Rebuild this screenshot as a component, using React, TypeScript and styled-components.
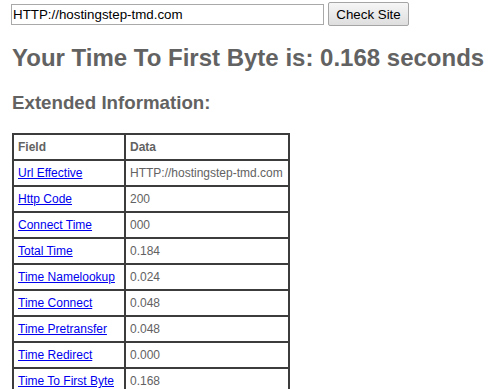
import * as React from 'react';
import styled, { createGlobalStyle } from 'styled-components';

const GlobalStyle = createGlobalStyle`
    body {
        margin: 0;
        background: #fff;
        font-family: "Liberation Sans", Arial, sans-serif;
        color: #626262;
    }
`;

const Page = styled.div`
    padding: 2px 11px 0 11px;
`;

const SearchForm = styled.form`
    display: flex;
    align-items: center;
    gap: 4px;
    margin: 0;
`;

const UrlInput = styled.input`
    width: 313px;
    height: 21px;
    box-sizing: border-box;
    border: 1px solid #a9a9a9;
    padding: 0 1px;
    font-family: "Liberation Sans", Arial, sans-serif;
    font-size: 13.33px;
    color: #000;
    outline: none;
`;

const CheckButton = styled.button`
    width: 81px;
    height: 24px;
    box-sizing: border-box;
    border: 1px solid #a5a5a5;
    border-radius: 2px;
    background: linear-gradient(#f6f6f6, #dedede);
    font-family: "Liberation Sans", Arial, sans-serif;
    font-size: 13.33px;
    color: #000;
    padding: 0;
`;

const Title = styled.h1`
    font-size: 24px;
    font-weight: bold;
    margin: 18px 0 0 1px;
    line-height: 28px;
`;

const SubTitle = styled.h2`
    font-size: 18.72px;
    font-weight: bold;
    margin: 19px 0 0 1px;
    line-height: 23px;
`;

const InfoTable = styled.table`
    margin: 19px 0 0 1px;
    width: 278px;
    table-layout: fixed;
    border: 1px solid #3c3c3c;
    border-spacing: 0;
    font-size: 12px;
`;

const Cell = styled.td<{ $wide?: boolean }>`
    border: 1px solid #3c3c3c;
    height: 26px;
    box-sizing: border-box;
    padding: 0 4px;
    width: ${(p) => (p.$wide ? '164px' : '112px')};
    white-space: nowrap;
    overflow: hidden;
`;

const HeadCell = styled(Cell).attrs({ as: 'th' })`
    text-align: left;
    font-weight: bold;
`;

const FieldLink = styled.a`
    color: #0000ee;
    text-decoration: underline;
`;

const rows = [
    { field: 'Url Effective', data: 'HTTP://hostingstep-tmd.com' },
    { field: 'Http Code', data: '200' },
    { field: 'Connect Time', data: '000' },
    { field: 'Total Time', data: '0.184' },
    { field: 'Time Namelookup', data: '0.024' },
    { field: 'Time Connect', data: '0.048' },
    { field: 'Time Pretransfer', data: '0.048' },
    { field: 'Time Redirect', data: '0.000' },
    { field: 'Time To First Byte', data: '0.168' },
];

const App = () => {
    return (
        <Page>
            <GlobalStyle />
            <SearchForm onSubmit={(e) => e.preventDefault()}>
                <UrlInput defaultValue="HTTP://hostingstep-tmd.com" />
                <CheckButton type="submit">Check Site</CheckButton>
            </SearchForm>
            <Title>Your Time To First Byte is: 0.168 seconds</Title>
            <SubTitle>Extended Information:</SubTitle>
            <InfoTable>
                <tbody>
                    <tr>
                        <HeadCell>Field</HeadCell>
                        <HeadCell $wide>Data</HeadCell>
                    </tr>
                    {rows.map((row) => (
                        <tr key={row.field}>
                            <Cell>
                                <FieldLink href="#">{row.field}</FieldLink>
                            </Cell>
                            <Cell $wide>{row.data}</Cell>
                        </tr>
                    ))}
                </tbody>
            </InfoTable>
        </Page>
    );
};

export default App;
